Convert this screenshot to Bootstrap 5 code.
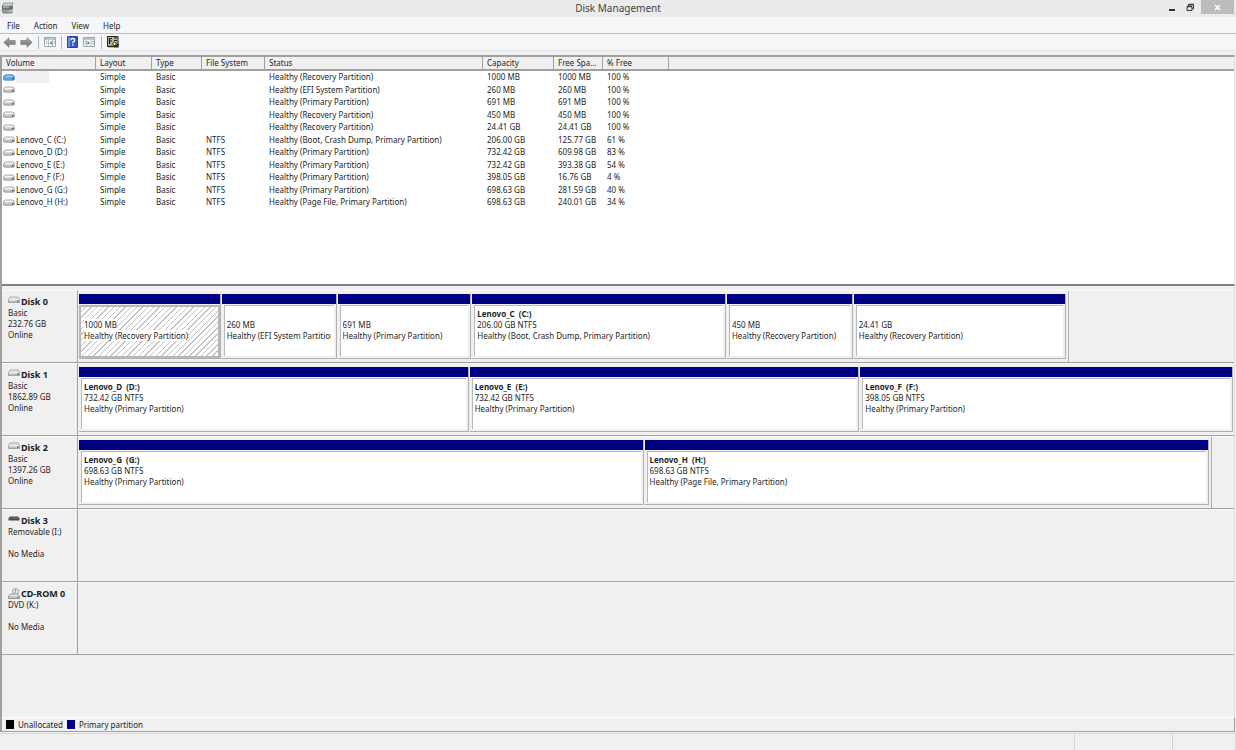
<!DOCTYPE html>
<html lang="en">
<head>
<meta charset="utf-8">
<meta name="viewport" content="width=device-width, initial-scale=1">
<title>Disk Management</title>
<link href="https://cdn.jsdelivr.net/npm/bootstrap@5.3.0/dist/css/bootstrap.min.css" rel="stylesheet">
<style>
  body { font-family: "Noto Sans", sans-serif; font-size: 8px; line-height: 11px; color: #1e1e1e; background: #f0f0f0; }
  button { border: 0; background: transparent; padding: 0; color: inherit; }
  svg { display: block; flex: none; }
  .title-bar { background: #ebebeb; height: 17px; }
  .title-bar h1 { font-size: 10px; line-height: 17px; color: #444; }
  .app-icon { left: 1px; top: 2px; }
  .win-controls { right: 2px; top: 0; }
  .win-controls button { width: 18px; height: 14px; display: flex; align-items: center; justify-content: center; }
  .win-controls .win-close { width: 33px; background: #bcbcbc; margin-left: 2px; }
  .menu-bar { background: #f5f6f7; height: 17px; border-bottom: 1px solid #bdbdbf; padding-left: 7px; gap: 14px; }
  .tool-bar { background: #f5f6f7; height: 17px; border-bottom: 1px solid #e6e6e6; padding-left: 3px; }
  .tool-sep { width: 1px; height: 13px; margin: 0 1px; background: #b4b4b4; }
  .pane-toggle { padding: 0 1px; }
  .work-area { border-left: 2px solid #a0a0a0; margin: 4px 1px 0 0; }
  .volume-pane { background: #fff; height: 231px; border-top: 2px solid #a0a0a0; border-bottom: 2px solid #808080; border-right: 1px solid #e3e3e3; }
  .volume-list { table-layout: fixed; width: 100%; line-height: 12px; border-collapse: separate; border-spacing: 0; }
  .volume-list th { height: 14px; padding: 0 4px; font-weight: 400; background: #f0f0f0; border-right: 1px solid #a0a0a0; border-bottom: 2px solid #a0a0a0; white-space: nowrap; }
  .volume-list th:last-child { border-right: 0; }
  .volume-list td { height: 12px; padding: 0 4px; white-space: nowrap; }
  .volume-list tr:nth-child(even) td { height: 13px; }
  .volume-list td:first-child { padding: 0 0 0 1px; }
  .volume-list td svg { margin-right: 1px; }
  .picked { width: 33px; height: 12px; background: #f0f0f0; }
  .disk-pane { border-right: 1px solid #e3e3e3; padding-top: 4px; }
  .disk-row { height: 73px; }
  .disk-label { width: 76px; border-right: 1px solid #a0a0a0; border-bottom: 1px solid #a0a0a0; border-top: 1px solid #fafafa; padding: 5px 0 0 6px; }
  .disk-label h2 { font-size: 9px; line-height: 11px; font-weight: 700; }
  .disk-label h2 svg { margin-right: 1px; }
  .disk-track { border-bottom: 1px solid #a0a0a0; border-top: 1px solid #fafafa; min-width: 0; }
  .disk-map { height: 100%; padding: 3px 2px 3px 1px; gap: 1px; border-right: 1px solid #b0b0b0; }
  .disk-map.full { border-right: 0; padding-right: 1px; }
  .part { flex: 1 1 0; min-width: 0; border-right: 1px solid #b0b0b0; border-bottom: 1px solid #b0b0b0; }
  .part-bar { height: 10px; background: #000080; }
  .part-body { margin: 1px 2px 2px 2px; border-top: 1px solid #b8b8c4; border-left: 1px solid #b8b8b8; background: #fff; padding: 2px 3px 0 2px; white-space: nowrap; overflow: hidden; }
  .part-body div { overflow: hidden; }
  .part-body strong { display: block; height: 11px; font-size: 8px; white-space: pre; }
  .part-body.hatched { margin: 1px 0 0 0; border: 2px solid #b8b8b8; padding: 1px 3px; background: repeating-linear-gradient(135deg, #fff 0 3px, #c4c4c4 3px 4px); }
  .hatched span { background: #fff; }
  .legend { border-top: 1px solid #fff; border-bottom: 1px solid #a0a0a0; border-right: 1px solid #a0a0a0; height: 15px; padding-left: 4px; gap: 4px; }
  .swatch { width: 8px; height: 9px; }
  .status-bar { height: 17px; margin-top: 1px; border-top: 1px solid #d7d7d7; }
  .status-bar div { border-right: 1px solid #d7d7d7; }
  .status-mid { width: 98px; }
  .status-end { width: 63px; }
</style>
</head>
<body>
<svg width="0" height="0" class="position-absolute" aria-hidden="true">
  <defs>
    <linearGradient id="metal" x1="0" y1="0" x2="0" y2="1"><stop offset="0" stop-color="#f4f4f4"/><stop offset="1" stop-color="#b4b4b4"/></linearGradient>
    <linearGradient id="arrow" x1="0" y1="0" x2="0" y2="1"><stop offset="0" stop-color="#a8a8a8"/><stop offset="1" stop-color="#707070"/></linearGradient>
    <symbol id="vol" viewBox="0 0 12 7"><path d="M2.500 1h7q2 .6 2 2.400v1.600q0 1.200-1.300 1.200H1.800Q.5 6.200.5 5V3.400Q.5 1.600 2.500 1z" fill="url(#metal)" stroke="#989898" stroke-width=".8"/><path d="M2.500 2.500h7" stroke="#fff" stroke-width=".8"/><circle cx="9.700" cy="4.600" r=".9" fill="#4a554a"/></symbol>
    <symbol id="vol-blue" viewBox="0 0 12 7"><path d="M2.500.8h7q2 .6 2 2.400v1.800q0 1.200-1.300 1.200H1.800Q.5 6.200.5 5V3.200Q.5 1.400 2.500.8z" fill="#5fa9e6" stroke="#3f86c4" stroke-width=".8"/><path d="M2.500 2.300h7" stroke="#a9d6f6"/><circle cx="9.700" cy="4.600" r=".9" fill="#1f5d96"/></symbol>
    <symbol id="drive" viewBox="0 0 12 8"><path d="M2 1h8l1.500 2.500v3H.5v-3z" fill="url(#metal)" stroke="#989898" stroke-width=".8"/><path d="M1 3.800h10" stroke="#fff" stroke-width=".8"/><path d="M9 5.200h1.600" stroke="#3c6a3c" stroke-width="1.200"/></symbol>
  </defs>
</svg>
<div class="min-vh-100 d-flex flex-column">
  <header>
    <div class="title-bar position-relative text-center">
      <svg class="app-icon position-absolute" width="13" height="12" viewBox="0 0 13 12" aria-hidden="true"><path d="M3 1h9l-1 3H1z" fill="#d5dbd5" stroke="#7d857d" stroke-width=".8"/><path d="M1 4h11v3H1z" fill="#6b746c"/><path d="M2 5h6" stroke="#c9d2c9"/><path d="M1 7.500h10v3.500H2z" fill="#9aa49b" stroke="#68716a" stroke-width=".8"/><path d="M8.500 9h2" stroke="#dfe"/></svg>
      <h1 class="m-0 fw-normal">Disk Management</h1>
      <div class="win-controls position-absolute d-flex">
        <button type="button" aria-label="Minimize"><svg width="7" height="8" viewBox="0 0 7 8"><path d="M0 7h6" stroke="#333" stroke-width="2"/></svg></button>
        <button type="button" aria-label="Restore"><svg width="9" height="9" viewBox="0 0 9 9"><path d="M1 3.500h5v4H1zM2.500 3V1.500h5v4.500H6.500" fill="none" stroke="#333"/><path d="M1 3.500h5M2.500 1.500h5" stroke="#333" stroke-width="1.600"/></svg></button>
        <button type="button" class="win-close" aria-label="Close"><svg width="7" height="7" viewBox="0 0 7 7"><path d="M1 1l5 5M6 1L1 6" stroke="#fff" stroke-width="1.500"/></svg></button>
      </div>
    </div>
    <nav class="menu-bar d-flex align-items-center" aria-label="Main menu">
      <button type="button">File</button><button type="button">Action</button><button type="button">View</button><button type="button">Help</button>
    </nav>
    <div class="tool-bar d-flex align-items-center gap-1" role="toolbar" aria-label="Tools">
      <button type="button" aria-label="Back"><svg width="13" height="11" viewBox="0 0 13 11"><path d="M.8 5.500L6 .8v2.700h6.200v4H6v2.700z" fill="url(#arrow)" stroke="#888" stroke-width=".8"/></svg></button>
      <button type="button" aria-label="Forward"><svg width="13" height="11" viewBox="0 0 13 11"><path d="M12.200 5.500L7 .8v2.700H.8v4H7v2.700z" fill="url(#arrow)" stroke="#888" stroke-width=".8"/></svg></button>
      <span class="tool-sep"></span>
      <button type="button" aria-label="Console tree"><svg width="12" height="10" viewBox="0 0 12 10"><path d="M.5.5h11v9H.5z" fill="#fff" stroke="#9aa5ae"/><path d="M1 2h10" stroke="#a3b3c0" stroke-width="1.500"/><path d="M4.500 3v6M8.500 3v6" stroke="#b3bcc4"/><path d="M2 4.500h1.500M2 6.500h1.500M9.500 4.500H11M9.500 6.500H11" stroke="#9aa8b2"/><path d="M7.800 4L5.500 6l2.300 2z" fill="#3d9a3d"/></svg></button>
      <span class="tool-sep"></span>
      <button type="button" aria-label="Help topics"><svg width="11" height="12" viewBox="0 0 11 12"><path d="M.5.5h10v11H.5z" fill="#3657bd" stroke="#2a459a"/><path d="M1 1h2v10H1z" fill="#6f8be0"/><path d="M4 4.200Q4 2.500 5.800 2.500T7.600 4.200Q7.600 5.200 6.500 5.800Q5.800 6.200 5.800 7.300M5.800 8.300v1.500" fill="none" stroke="#fff" stroke-width="1.400"/></svg></button>
      <button type="button" class="pane-toggle" aria-label="Action pane"><svg width="12" height="10" viewBox="0 0 12 10"><path d="M.5.5h11v9H.5z" fill="#fff" stroke="#9aa5ae"/><path d="M1 2h10" stroke="#a3b3c0" stroke-width="1.500"/><path d="M3.500 3v6M8 3v6" stroke="#b3bcc4"/><path d="M1.500 4.500H3M1.500 6.500H3M9 4.500h2M9 6.500h2" stroke="#9aa8b2"/><path d="M4.500 4L7 6 4.500 8z" fill="#3d9a3d"/></svg></button>
      <span class="tool-sep"></span>
      <button type="button" aria-label="Disk settings"><svg width="12" height="12" viewBox="0 0 12 12"><path d="M.5.5h10.500v10H.5z" fill="#b9b79c" stroke="#222"/><path d="M2 2.500h3M2.500 2v6M2 5h3M7 2h3M7 4.500h3" stroke="#222" stroke-width="1.200"/><path d="M5.500 7q2-2.500 4 0l-1 2.500h-2z" fill="#e9df6c" stroke="#222" stroke-width=".8"/><path d="M8.500 9.500L11.500 7v4.500H7z" fill="#222"/><path d="M1 10.500h7" stroke="#222" stroke-width="1.500"/></svg></button>
    </div>
  </header>

  <main class="work-area flex-grow-1 d-flex flex-column">
    <section class="volume-pane" aria-label="Volumes">
      <table class="volume-list">
        <colgroup><col style="width:94px"><col style="width:56px"><col style="width:50px"><col style="width:63px"><col style="width:218px"><col style="width:71px"><col style="width:49px"><col style="width:66px"><col></colgroup>
        <thead><tr><th>Volume</th><th>Layout</th><th>Type</th><th>File System</th><th>Status</th><th>Capacity</th><th>Free Spa...</th><th>% Free</th><th></th></tr></thead>
        <tbody>
          <tr><td><div class="d-flex align-items-center"><svg width="12" height="7"><use href="#vol-blue"/></svg><span class="picked"></span></div></td><td>Simple</td><td>Basic</td><td></td><td>Healthy (Recovery Partition)</td><td>1000 MB</td><td>1000 MB</td><td>100 %</td><td></td></tr>
          <tr><td><svg width="12" height="7"><use href="#vol"/></svg></td><td>Simple</td><td>Basic</td><td></td><td>Healthy (EFI System Partition)</td><td>260 MB</td><td>260 MB</td><td>100 %</td><td></td></tr>
          <tr><td><svg width="12" height="7"><use href="#vol"/></svg></td><td>Simple</td><td>Basic</td><td></td><td>Healthy (Primary Partition)</td><td>691 MB</td><td>691 MB</td><td>100 %</td><td></td></tr>
          <tr><td><svg width="12" height="7"><use href="#vol"/></svg></td><td>Simple</td><td>Basic</td><td></td><td>Healthy (Recovery Partition)</td><td>450 MB</td><td>450 MB</td><td>100 %</td><td></td></tr>
          <tr><td><svg width="12" height="7"><use href="#vol"/></svg></td><td>Simple</td><td>Basic</td><td></td><td>Healthy (Recovery Partition)</td><td>24.41 GB</td><td>24.41 GB</td><td>100 %</td><td></td></tr>
          <tr><td><div class="d-flex align-items-center"><svg width="12" height="7"><use href="#vol"/></svg>Lenovo_C (C:)</div></td><td>Simple</td><td>Basic</td><td>NTFS</td><td>Healthy (Boot, Crash Dump, Primary Partition)</td><td>206.00 GB</td><td>125.77 GB</td><td>61 %</td><td></td></tr>
          <tr><td><div class="d-flex align-items-center"><svg width="12" height="7"><use href="#vol"/></svg>Lenovo_D (D:)</div></td><td>Simple</td><td>Basic</td><td>NTFS</td><td>Healthy (Primary Partition)</td><td>732.42 GB</td><td>609.98 GB</td><td>83 %</td><td></td></tr>
          <tr><td><div class="d-flex align-items-center"><svg width="12" height="7"><use href="#vol"/></svg>Lenovo_E (E:)</div></td><td>Simple</td><td>Basic</td><td>NTFS</td><td>Healthy (Primary Partition)</td><td>732.42 GB</td><td>393.38 GB</td><td>54 %</td><td></td></tr>
          <tr><td><div class="d-flex align-items-center"><svg width="12" height="7"><use href="#vol"/></svg>Lenovo_F (F:)</div></td><td>Simple</td><td>Basic</td><td>NTFS</td><td>Healthy (Primary Partition)</td><td>398.05 GB</td><td>16.76 GB</td><td>4 %</td><td></td></tr>
          <tr><td><div class="d-flex align-items-center"><svg width="12" height="7"><use href="#vol"/></svg>Lenovo_G (G:)</div></td><td>Simple</td><td>Basic</td><td>NTFS</td><td>Healthy (Primary Partition)</td><td>698.63 GB</td><td>281.59 GB</td><td>40 %</td><td></td></tr>
          <tr><td><div class="d-flex align-items-center"><svg width="12" height="7"><use href="#vol"/></svg>Lenovo_H (H:)</div></td><td>Simple</td><td>Basic</td><td>NTFS</td><td>Healthy (Page File, Primary Partition)</td><td>698.63 GB</td><td>240.01 GB</td><td>34 %</td><td></td></tr>
        </tbody>
      </table>
    </section>

    <section class="disk-pane flex-grow-1" aria-label="Disks">
      <div class="disk-row d-flex">
        <div class="disk-label flex-shrink-0"><h2 class="m-0 d-flex"><svg width="12" height="8"><use href="#drive"/></svg>Disk 0</h2>Basic<br>232.76 GB<br>Online</div>
        <div class="disk-track flex-grow-1">
          <div class="disk-map d-flex" style="width:85.7%">
            <div class="part d-flex flex-column" style="flex-grow:142"><div class="part-bar"></div><div class="part-body hatched flex-grow-1"><strong></strong><div><span>1000 MB</span></div><div><span>Healthy (Recovery Partition)</span></div></div></div>
            <div class="part d-flex flex-column" style="flex-grow:115"><div class="part-bar"></div><div class="part-body flex-grow-1"><strong></strong><div>260 MB</div><div>Healthy (EFI System Partition)</div></div></div>
            <div class="part d-flex flex-column" style="flex-grow:134"><div class="part-bar"></div><div class="part-body flex-grow-1"><strong></strong><div>691 MB</div><div>Healthy (Primary Partition)</div></div></div>
            <div class="part d-flex flex-column" style="flex-grow:255"><div class="part-bar"></div><div class="part-body flex-grow-1"><strong>Lenovo_C  (C:)</strong><div>206.00 GB NTFS</div><div>Healthy (Boot, Crash Dump, Primary Partition)</div></div></div>
            <div class="part d-flex flex-column" style="flex-grow:126"><div class="part-bar"></div><div class="part-body flex-grow-1"><strong></strong><div>450 MB</div><div>Healthy (Recovery Partition)</div></div></div>
            <div class="part d-flex flex-column" style="flex-grow:213"><div class="part-bar"></div><div class="part-body flex-grow-1"><strong></strong><div>24.41 GB</div><div>Healthy (Recovery Partition)</div></div></div>
          </div>
        </div>
      </div>
      <div class="disk-row d-flex">
        <div class="disk-label flex-shrink-0"><h2 class="m-0 d-flex"><svg width="12" height="8"><use href="#drive"/></svg>Disk 1</h2>Basic<br>1862.89 GB<br>Online</div>
        <div class="disk-track flex-grow-1">
          <div class="disk-map full d-flex">
            <div class="part d-flex flex-column" style="flex-grow:390"><div class="part-bar"></div><div class="part-body flex-grow-1"><strong>Lenovo_D  (D:)</strong><div>732.42 GB NTFS</div><div>Healthy (Primary Partition)</div></div></div>
            <div class="part d-flex flex-column" style="flex-grow:390"><div class="part-bar"></div><div class="part-body flex-grow-1"><strong>Lenovo_E  (E:)</strong><div>732.42 GB NTFS</div><div>Healthy (Primary Partition)</div></div></div>
            <div class="part d-flex flex-column" style="flex-grow:373"><div class="part-bar"></div><div class="part-body flex-grow-1"><strong>Lenovo_F  (F:)</strong><div>398.05 GB NTFS</div><div>Healthy (Primary Partition)</div></div></div>
          </div>
        </div>
      </div>
      <div class="disk-row d-flex">
        <div class="disk-label flex-shrink-0"><h2 class="m-0 d-flex"><svg width="12" height="8"><use href="#drive"/></svg>Disk 2</h2>Basic<br>1397.26 GB<br>Online</div>
        <div class="disk-track flex-grow-1">
          <div class="disk-map d-flex" style="width:98.1%">
            <div class="part d-flex flex-column" style="flex-grow:1"><div class="part-bar"></div><div class="part-body flex-grow-1"><strong>Lenovo_G  (G:)</strong><div>698.63 GB NTFS</div><div>Healthy (Primary Partition)</div></div></div>
            <div class="part d-flex flex-column" style="flex-grow:1"><div class="part-bar"></div><div class="part-body flex-grow-1"><strong>Lenovo_H  (H:)</strong><div>698.63 GB NTFS</div><div>Healthy (Page File, Primary Partition)</div></div></div>
          </div>
        </div>
      </div>
      <div class="disk-row d-flex">
        <div class="disk-label flex-shrink-0"><h2 class="m-0 d-flex"><svg width="12" height="8" viewBox="0 0 12 8"><path d="M2 1.500h8l1.500 1.500v2.500H.5V3z" fill="#4a4a4a"/><path d="M1 3h10" stroke="#8a8a8a" stroke-width=".6"/></svg>Disk 3</h2>Removable (I:)<br><br>No Media</div>
        <div class="disk-track flex-grow-1"></div>
      </div>
      <div class="disk-row d-flex">
        <div class="disk-label flex-shrink-0"><h2 class="m-0 d-flex"><svg width="12" height="11" viewBox="0 0 12 11"><circle cx="7.500" cy="3.500" r="3" fill="#e6e6e6" stroke="#8c8c8c" stroke-width=".8"/><path d="M7.500 1v4" stroke="#9c9c9c"/><path d="M2.500 6h7.500l1.500 2v2.500H.5V8z" fill="url(#metal)" stroke="#8c8c8c" stroke-width=".8"/><path d="M9 9.200h1.600" stroke="#3c8a3c"/></svg>CD-ROM 0</h2>DVD (K:)<br><br>No Media</div>
        <div class="disk-track flex-grow-1"></div>
      </div>
    </section>
    <div class="legend d-flex align-items-center"><span class="swatch" style="background:#000"></span>Unallocated<span class="swatch" style="background:#000080"></span>Primary partition</div>
  </main>
  <footer class="status-bar d-flex" aria-label="Status"><div class="flex-grow-1"></div><div class="status-mid"></div><div class="status-end"></div></footer>
</div>
<script src="https://cdn.jsdelivr.net/npm/bootstrap@5.3.0/dist/js/bootstrap.bundle.min.js"></script>
</body>
</html>
